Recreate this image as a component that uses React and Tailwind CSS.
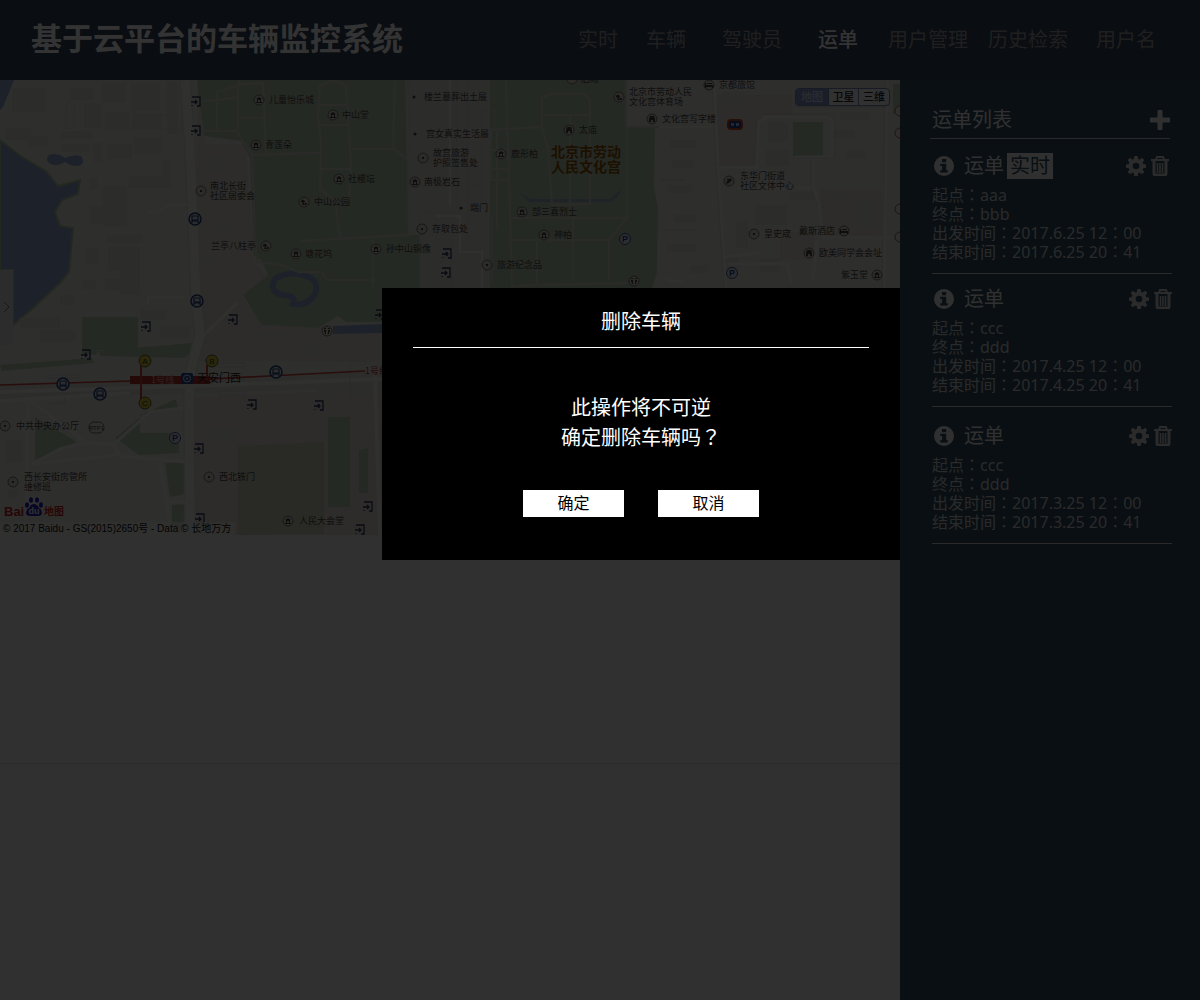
import React from "react";

const navItems = [
  { label: "实时", space: "" },
  { label: "车辆", space: "ml-7" },
  { label: "驾驶员", space: "ml-9" },
  { label: "运单", space: "ml-9", active: true },
  { label: "用户管理", space: "ml-[30px]" },
  { label: "历史检索", space: "ml-5" },
  { label: "用户名", space: "ml-7" },
];

const orders = [
  { live: true, space: "pt-[14px]", inset: "pr-[3px]", from: "aaa", to: "bbb", date: "2017.6.25" },
  { live: false, space: "pt-3", inset: "", from: "ccc", to: "ddd", date: "2017.4.25" },
  { live: false, space: "pt-4", inset: "", from: "ccc", to: "ddd", date: "2017.3.25" },
];

/* ---------- icons ---------- */

function PlusIcon() {
  return (
    <svg viewBox="0 0 20 20" className="size-5" fill="currentColor" aria-hidden="true">
      <path d="M8.500 0h3a1 1 0 0 1 1 1v6.500H19a1 1 0 0 1 1 1v3a1 1 0 0 1-1 1h-6.500V19a1 1 0 0 1-1 1h-3a1 1 0 0 1-1-1v-6.500H1a1 1 0 0 1-1-1v-3a1 1 0 0 1 1-1h6.500V1a1 1 0 0 1 1-1z" />
    </svg>
  );
}

function InfoIcon() {
  return (
    <svg viewBox="0 0 20 20" className="size-5" aria-hidden="true">
      <circle cx="10" cy="10" r="10" fill="currentColor" />
      <path d="M8 3h4.200v3.200H8zM6.200 7.800h6v6.400h1.600v2.300H6.200v-2.300h1.900v-4.100H6.200z" fill="#2d4b5f" />
    </svg>
  );
}

function GearIcon() {
  return (
    <svg viewBox="0 0 20 20" className="size-5" fill="currentColor" aria-hidden="true">
      <path
        fillRule="evenodd"
        d="M8.300 0h3.400l.5 2.900 1.400.6 2.500-1.700 2.200 2.200-1.700 2.400.6 1.500 2.800.5v3.300l-2.800.5-.6 1.500 1.700 2.400-2.200 2.200-2.500-1.700-1.400.6-.5 2.800H8.300l-.5-2.800-1.400-.6-2.500 1.700-2.200-2.200 1.700-2.400-.6-1.500L0 11.700V8.400l2.800-.5.6-1.500L1.700 4l2.200-2.200 2.500 1.700 1.400-.6zM10 6.700a3.300 3.300 0 1 0 0 6.600 3.300 3.300 0 0 0 0-6.600z"
      />
    </svg>
  );
}

function TrashIcon() {
  return (
    <svg viewBox="0 0 18 20" className="h-5 w-[18px]" fill="none" stroke="currentColor" aria-hidden="true">
      <path d="M0 4h18" strokeWidth="2" />
      <path d="M5 3.500 6 1h6l1 2.500" strokeWidth="2" />
      <path d="M3 5v12.500A1.500 1.500 0 0 0 4.500 19h9a1.500 1.500 0 0 0 1.500-1.500V5" strokeWidth="3" />
      <path d="M6.500 7v10M9 7v10M11.500 7v10" strokeWidth="1.600" />
    </svg>
  );
}

/* ---------- map ---------- */

const places = [
  ["hall", 259, 100, 269, "儿童怡乐城"],
  ["hall", 256, 145, 265, "青莲朵"],
  ["dot", 201, 191, 210, "南北长街", "社区居委会"],
  ["tree", 266, 246, 211, "兰亭八柱亭"],
  ["hall", 296, 254, 305, "塘花坞"],
  ["hall", 333, 115, 342, "中山堂"],
  ["hall", 339, 179, 348, "社稷坛"],
  ["tree", 304, 202, 314, "中山公园"],
  ["hall", 376, 249, 386, "孙中山铜像"],
  ["point", 414, 97, 424, "楼兰墓葬出土展"],
  ["point", 415, 134, 426, "宫女真实生活展"],
  ["dot", 423, 158, 433, "故宫旅游", "护照签售处"],
  ["hall", 415, 182, 424, "南极岩石"],
  ["point", 461, 208, 470, "端门"],
  ["dot", 422, 229, 432, "存取包处"],
  ["dot", 487, 265, 497, "旅游纪念品"],
  ["hall", 501, 154, 511, "鹿形柏"],
  ["gate", 569, 130, 579, "太庙"],
  ["hall", 522, 212, 532, "郜三喜烈士"],
  ["hall", 544, 235, 554, "神柏"],
  ["dot", 572, 79, 581, "后殿"],
  ["tree", 619, 97, 629, "北京市劳动人民", "文化宫体育场"],
  ["bed", 709, 85, 719, "京都旅馆"],
  ["gate", 652, 119, 662, "文化宫写字楼"],
  ["pen", 729, 181, 740, "东华门街道", "社区文体中心"],
  ["dot", 754, 234, 764, "皇史宬"],
  ["bed", 844, 231, 799, "戴斯酒店"],
  ["gate", 809, 253, 819, "欧美同学会会址"],
  ["hall", 877, 275, 841, "紫玉堂"],
  ["dot", 5, 426, 16, "中共中央办公厅"],
  ["dot", 13, 482, 24, "西长安街房管所", "维修班"],
  ["dot", 209, 477, 219, "西北铁门"],
  ["hall", 288, 521, 299, "人民大会堂"],
  ["wc", 327, 331],
  ["wc", 634, 281],
];

const glyphs = {
  hall: "M-3 -1 0 -3 3 -1zM-2 0h1v2h-1zM1 0h1v2h-1zM-3 2h6v1h-6zM-2 -1h4v1h-4z",
  tree: "M-3 0a2 2 0 0 1 3-2l1 2-1 1v1h2l1 1h-5l1-2zM1 1h2v1h-2z",
  gate: "M-3 3v-3l1-3h4l1 3v3h-2v-2h-2v2z",
  bed: "M-4 -2h1v2h7v3h-1v-1h-6v1h-1zM-2 -2h5v1h-5z",
  pen: "M-3 3l1-3 3-3 2 2-3 3zM-2 -2h2v1h-2z",
  wc: "M-3 -3h2v1h-2zM1 -3h2v1h-2zM-3 -1h2v4h-1v-2h-1zM1 -1h2v2h-1v2h-1z",
  dot: "M-1 -1h2v2h-2z",
};

const exits = [
  [195, 101], [195, 130], [145, 326], [85, 354], [232, 319], [446, 253], [445, 272],
  [251, 404], [318, 405], [198, 448], [367, 506], [359, 529], [199, 518], [379, 314],
];
const buses = [[195, 219], [197, 301], [63, 384], [100, 394], [276, 372]];
const parkings = [[625, 239], [732, 273], [175, 438]];
const stations = [["A", 145, 361], ["B", 212, 361], ["C", 145, 403]];

const buildings = [
  [12, 88, 34, 24], [71, 88, 23, 12], [102, 83, 24, 20], [131, 83, 29, 28], [84, 103, 18, 25],
  [105, 112, 25, 18], [133, 113, 29, 16], [61, 131, 31, 8], [62, 144, 28, 8], [134, 137, 27, 17],
  [107, 144, 25, 15], [93, 143, 9, 19], [129, 176, 34, 12], [162, 160, 9, 28], [103, 186, 24, 41],
  [90, 178, 7, 11], [90, 206, 13, 18], [107, 235, 36, 8], [108, 247, 32, 24], [85, 248, 14, 16],
  [105, 279, 18, 12], [82, 280, 14, 9], [120, 270, 20, 25], [60, 295, 14, 10], [167, 82, 11, 52],
  [5, 128, 26, 12], [28, 136, 20, 10], [20, 318, 40, 10], [40, 330, 36, 12], [140, 310, 26, 10],
  [160, 326, 30, 12], [205, 155, 20, 18], [204, 210, 8, 12], [216, 225, 14, 9], [205, 250, 9, 14],
  [255, 331, 30, 5], [300, 345, 22, 10], [6, 440, 16, 22], [8, 490, 10, 8], [206, 428, 30, 12],
  [462, 115, 20, 68], [425, 240, 14, 30], [450, 90, 18, 20],
  [670, 140, 26, 8], [672, 160, 22, 8], [668, 185, 24, 8], [674, 215, 22, 8], [666, 244, 30, 8],
  [722, 92, 22, 12], [768, 122, 20, 20], [765, 150, 24, 16], [755, 205, 32, 20], [790, 192, 24, 8],
  [736, 222, 12, 26], [830, 130, 24, 8], [846, 150, 20, 8], [825, 192, 20, 8], [856, 200, 20, 28],
  [725, 255, 14, 14], [760, 258, 20, 14], [840, 112, 30, 8], [690, 265, 18, 8],
];

function CityMap() {
  return (
    <svg viewBox="0 80 900 455" className="block h-auto w-full" role="img" aria-label="地图">
      <rect x="0" y="80" width="900" height="455" fill="#e6e6e2" />
      <path d="M405 80h85v208h-70v-53h-11z" fill="#dcdbd8" />

      {/* sandy blocks */}
      <g fill="#dedbd1">
        <path d="M197 82h8v62h40l10 120 12 12-25 22 26 28h112v35H198z" />
        <path d="M195 397l187-8v146H195z" />
        <path d="M717 95h75v20h-30l-5 50h-40zM820 190h62v46h-62zM780 232h34v28h-34z" />
      </g>

      {/* parks */}
      <g fill="#b9cbb2">
        <path d="M197 80h208l4 155h11v53h-38v34h-36l-8-6-20 12-56-3-19-30 25-20-6-14-8-5-4-98-9-17-37-5z" />
        <path d="M490 80h137v46l28 2-1 60 4 20-1 65-5 15H490z" />
        <path d="M82 317h56v33H98l-2 5-14-2zM98 351l94-8v10l-8 5-83-2zM0 365l92-7 2 5-92 8z" />
        <path d="M35 417l42 25-42 18zM115 438l30-25 31-14 2 10-38 6v18h39v20l-40 2z" />
        <path d="M165 463l20-1v32l-15 3zM172 505l14-1v28h-14zM328 417h22v90h-22zM359 450l9-2v45h-9z" />
        <path d="M793 122h30v34h-30zM893 84h7v30h-7z" />
      </g>
      <path d="M238 446l86-4v92l-86 1z" fill="#cbcfbf" />
      <path d="M318 385h40l24-3v12l-64 6z" fill="#dcdacf" />

      {/* water */}
      <g fill="#92a7cd">
        <path d="M0 80h14L3 107l-3 3z" />
        <path
          d="M0 140l22 17 24 14 12 15 22-6-2 14-16 6-7 12 5 14 13 2-4 44-9 11-28 26-19 16v-55H0z"
          stroke="#aec6a2"
          strokeWidth="2"
        />
        <path d="M49 155q8-3 16 3q8-4 16-2q4 5 0 9q-8 3-16-3q-9 6-16 1q-4-4 0-8z" />
        <path d="M333 326l49-2v9l-49 1z" />
        <path d="M520 193l10 6h80l10-9v4l-9 8h-82z" opacity="0.800" />
      </g>
      <path d="M276 278q16-8 30-2q14 4 9 18q-8 13-22 10q4-8-10-9q-16-4-7-17z" fill="#b9cbb2" stroke="#92a7cd" strokeWidth="6" />

      <g fill="#dcdbd6">
        {buildings.map(([x, y, w, h], i) => (
          <rect key={i} x={x} y={y} width={w} height={h} />
        ))}
      </g>
      <path d="M133 115h49v14h-49zM66 103h8v25h-8z" fill="none" stroke="#d2d2d6" strokeDasharray="2 1" />

      {/* park paths */}
      <g fill="none" stroke="#d3d5ce" strokeWidth="2">
        <path d="M217 132V92l22-7V80M238 85v48l14 22 3 85 2 22 24 3 20 8M200 101l18-1 20-3M239 84l24-1 3 70M200 131h39M240 118h26M252 155l60-2h10" />
        <path d="M320 85l14-5 12 5 5 82-2 35M320 85l-2 30 3 30-1 44 15 12 5 37M318 105h30M318 125h31M300 153h20M320 169h30M350 149h43l2-69M393 148l15 12 1 75-109 6M373 240v48M300 272h22l5 8h46" />
        <path d="M506 80l6 206 30-1 86-2M490 130l52-3V98l8-4h34l6 6v104l-38 1-4-57-6-20M544 115h45M570 116v88M491 130v50h15M497 130v100M491 150h15M491 169h15M511 218h116l-18 22M511 240h98v40M573 219v60M537 242v43M626 80v47M627 128v90M627 127h32" />
      </g>

      {/* streets */}
      <g fill="none" stroke="#dbdad7">
        <path d="M185 80l5 65 6 155 4 35-9 35-2 30 1 135" strokeWidth="12" />
        <path d="M0 392l190-6 192-7" strokeWidth="15" />
      </g>
      <g fill="none" stroke="#eeeeec">
        <path d="M185 80l5 65 6 155 4 35-9 35-2 30 1 135" strokeWidth="9" />
        <path d="M0 392l190-6 192-7M0 401l130-8M375 375l5 160" strokeWidth="4" />
        <path d="M28 400l-2 135M31 401l55 42 28 1 36-32 33-4M30 465l30-16 25-6M113 444l8 12 64 6M33 464l85-9M160 463l12 72M165 502h22M201 338l36-35" strokeWidth="3" />
        <path d="M714 80l4 85 8 123M720 167h37l2-45 8-5h60l5 4v36h-36M813 160v27l6 15 4 35 70 1M813 188h-75M727 264h60l5 20M817 240l-4 40M887 80l-3 208M760 253l-35 4M667 280l16 2" strokeWidth="3" />
        <path d="M148 213l12-2 8-6h23M148 305v-8h37M436 216h24v36h22v36M450 80v125M659 127h57" strokeWidth="2" />
      </g>
      <g fill="none" stroke="#d6d4d0" strokeWidth="1">
        <path d="M408 80l4 135h8v70M480 110h15v20M482 110v95l10 10v70M418 186h65M426 212h34v-4h20M436 216v24h16v48M468 80v160M457 80v128" />
        <path d="M712 80l4 85 8 123M717 165h37l2-45M755 120l8-6h64l8 4v40h-38M811 160v30l6 15M885 80l-3 208M660 180h25M665 230h30M48 375h31v3H48zM50 403h15v-6M218 363h26v4h-26zM219 391h25v4h-25zM335 361h30v4M350 365v35" />
      </g>

      {/* metro line */}
      <g stroke="#c9403a" fill="none">
        <path d="M0 385l130-4 80-2 155-8" strokeWidth="1.500" />
        <path d="M130 380h80" strokeWidth="8" stroke="#b0342f" />
        <path d="M141 365v38M207 365v14" strokeWidth="2" />
      </g>
      <g fontFamily='"Noto Sans CJK SC", sans-serif'>
        <text x="151" y="383" fontSize="9" fill="#ef9a94">1号线</text>
        <text x="365" y="374" fontSize="9" fill="#b93c38">1号线</text>
      </g>
      <rect x="181" y="373" width="12" height="11" rx="2" fill="#244a9c" />
      <circle cx="187" cy="378.500" r="3.500" fill="none" stroke="#dfe6f5" />
      <circle cx="187" cy="378.500" r="1" fill="#dfe6f5" />
      <text x="197" y="382" fontSize="11" fill="#1a1a1a" fontFamily='"Noto Sans CJK SC", sans-serif'>天安门西</text>
      {stations.map(([name, x, y]) => (
        <g key={name}>
          <circle cx={x} cy={y} r="6" fill="#cfc23a" stroke="#5c5a30" />
          <text x={x} y={y + 3} fontSize="8" textAnchor="middle" fill="#333" fontFamily='"Liberation Sans", sans-serif'>{name}</text>
        </g>
      ))}

      {/* transport pins */}
      {buses.map(([x, y]) => (
        <g key={x} transform={`translate(${x} ${y})`}>
          <circle r="6" fill="#d9dde8" stroke="#1f4179" strokeWidth="1.500" />
          <path d="M-3 -3h6v5h-6zM-3 2v2M3 2v2M-3 1h6" fill="none" stroke="#2a467c" strokeWidth="1.200" />
        </g>
      ))}
      {parkings.map(([x, y]) => (
        <g key={x} transform={`translate(${x} ${y})`}>
          <circle r="5.500" fill="#dfe2ec" stroke="#3a5591" />
          <text y="3" fontSize="9" fontWeight="700" textAnchor="middle" fill="#23408a" fontFamily='"Liberation Sans", sans-serif'>P</text>
        </g>
      ))}
      {exits.map(([x, y]) => (
        <g key={`${x}-${y}`} transform={`translate(${x} ${y})`} fill="none" stroke="#2c3b5c">
          <path d="M-3 -4H5V5H2M-4 1H2M0 -1l2 2-2 2M-3 4v1" strokeWidth="1.300" />
        </g>
      ))}

      {/* places */}
      <g fontFamily='"Noto Sans CJK SC", sans-serif' fontSize="9" fill="#4e4a46">
        {places.map(([kind, x, y, tx, first, second], i) => (
          <g key={i}>
            {kind === "point" ? (
              <circle cx={x} cy={y} r="1.500" fill="#444" />
            ) : (
              <g transform={`translate(${x} ${y})`}>
                <circle r="5" fill="#d6d5d0" stroke="#77736e" />
                <path d={glyphs[kind]} fill="#4a4642" />
              </g>
            )}
            {first && <text x={tx} y={second ? y - 2 : y + 3}>{first}</text>}
            {second && <text x={tx} y={y + 8}>{second}</text>}
          </g>
        ))}
      </g>
      <g fontFamily='"Noto Sans CJK SC", sans-serif' fontSize="14" fontWeight="700" fill="#8c5200">
        <text x="551" y="157">北京市劳动</text>
        <text x="551" y="172">人民文化宫</text>
      </g>
      <rect x="89" y="422" width="15" height="11" rx="5" fill="#e6e4df" stroke="#77736e" />
      <text x="96.500" y="430" fontSize="6" textAnchor="middle" fill="#444" fontFamily='"Liberation Sans", sans-serif'>RTP1</text>
      <rect x="728" y="120" width="14" height="9" rx="3" fill="#1c3f96" stroke="#c4471e" strokeWidth="2" />
      <path d="M731 123h3v3h-3zM736 123h3v3h-3z" fill="#b8c4e4" />
      <g fill="#e8e4de" stroke="#b8632e">
        <circle cx="900" cy="111" r="5" />
        <circle cx="900" cy="133" r="5" />
        <circle cx="900" cy="209" r="5" stroke="#77736e" />
        <circle cx="900" cy="237" r="5" stroke="#77736e" />
      </g>

      {/* side panel handle */}
      <path d="M0 270h13v75H0z" fill="#dcdcdc" />
      <path d="M4 302l5 5-5 5" fill="none" stroke="#777" />

      {/* provider mark */}
      <g fontFamily='"Liberation Sans", "Noto Sans CJK SC", sans-serif' fontWeight="700" fill="#c4211f">
        <text x="4" y="516" fontSize="13">Bai</text>
        <text x="44" y="515" fontSize="10" fontFamily='"Noto Sans CJK SC", sans-serif'>地图</text>
      </g>
      <g fill="#2726b8" stroke="#f2f2f2" strokeWidth="2" paintOrder="stroke">
        <path d="M34 504c4 0 8 6 8 9s-3 3-8 3-8 0-8-3 4-9 8-9z" />
        <ellipse cx="27" cy="505" rx="2" ry="2.800" />
        <ellipse cx="31" cy="500" rx="2" ry="2.800" />
        <ellipse cx="37" cy="500" rx="2" ry="2.800" />
        <ellipse cx="41" cy="505" rx="2" ry="2.800" />
      </g>
      <text x="34" y="514" fontSize="9" fontWeight="700" textAnchor="middle" fill="#eee" fontFamily='"Liberation Sans", sans-serif'>du</text>
      <rect x="0" y="522" width="235" height="13" fill="#f2f2f0" opacity="0.700" />
      <text x="3" y="532" fontSize="10" fill="#111" fontFamily='"Liberation Sans", "Noto Sans CJK SC", sans-serif'>
        © 2017 Baidu - GS(2015)2650号 - Data © 长地万方
      </text>
    </svg>
  );
}

/* ---------- sidebar ---------- */

function Centered({ children }) {
  return <span className="font-['Noto_Sans_CJK_TC',sans-serif]">{children}</span>;
}

function Detail({ children }) {
  return <p className="h-[19px]">{children}</p>;
}

function Order({ order }) {
  return (
    <li className={`border-b border-[#d0d0d0] pb-3 ${order.space}`}>
      <div className={`flex h-[26px] items-center pl-0.5 ${order.inset}`}>
        <button type="button" aria-label="详情" className="text-[#f0f0f0]">
          <InfoIcon />
        </button>
        <h3 className="ml-2.5 text-xl leading-[26px]">运单</h3>
        {order.live && (
          <span className="ml-[3px] bg-[#f0f0f0] px-[3px] text-xl leading-[26px] text-[#2d4b5f]">实时</span>
        )}
        <div className="ml-auto flex items-center gap-[5px] text-[#d4d4d4]">
          <button type="button" aria-label="设置"><GearIcon /></button>
          <button type="button" aria-label="删除"><TrashIcon /></button>
        </div>
      </div>
      <div className="mt-1.5 text-base leading-[18px] text-[#d0d0d0]">
        <Detail>起点<Centered>：</Centered>{order.from}</Detail>
        <Detail>终点<Centered>：</Centered>{order.to}</Detail>
        <Detail>出发时间<Centered>：</Centered>{order.date} 12<Centered>：</Centered>00</Detail>
        <Detail>结束时间<Centered>：</Centered>{order.date} 20<Centered>：</Centered>41</Detail>
      </div>
    </li>
  );
}

export default function App() {
  return (
    <div className="relative flex min-h-screen flex-col bg-[#f0f0f0] font-['Noto_Sans','Noto_Sans_CJK_SC',sans-serif]">
      <header className="flex h-20 items-center justify-between bg-[#324058] pr-11 pl-[31px]">
        <h1 className="pb-1 text-[31px] leading-10 font-bold text-white">基于云平台的车辆监控系统</h1>
        <nav className="flex text-xl leading-7">
          {navItems.map((item) => (
            <a
              key={item.label}
              href="#"
              aria-current={item.active ? "page" : undefined}
              className={`${item.space} ${item.active ? "font-medium text-white" : "text-[#9c9c9c]"}`}
            >
              {item.label}
            </a>
          ))}
        </nav>
      </header>

      <div className="flex flex-1">
        <main className="relative flex min-w-0 flex-1 flex-col overflow-hidden">
          <div className="relative">
            <CityMap />
            <div className="absolute top-2 right-[10px] flex rounded-sm border border-[#6d86b5] bg-[#f4f4f4] text-[11px] leading-4 font-medium text-[#222] shadow">
              <button type="button" className="w-8 bg-[#7f97cc] text-[#d8def0]">地图</button>
              <button type="button" className="w-[30px] border-l border-[#6d86b5]">卫星</button>
              <button type="button" className="w-[31px] border-l border-[#6d86b5]">三维</button>
            </div>
          </div>
          <div className="grid flex-1 grid-cols-2 grid-rows-[229px_1fr]">
            <div className="border-r border-b border-r-[#e8e8e8] border-b-[#d4d4d4]" />
            <div className="border-b border-[#d4d4d4]" />
            <div className="border-r border-[#e8e8e8]" />
          </div>

          <section
            role="dialog"
            aria-modal="true"
            aria-labelledby="dialog-title"
            className="absolute top-52 right-0 z-20 w-[518px] max-w-full bg-black px-[31px] pt-5 pb-[43px] text-center text-white"
          >
            <h2 id="dialog-title" className="border-b border-white pb-[11px] text-xl leading-7">删除车辆</h2>
            <div className="mt-[46px] text-xl leading-[28px]">
              <p className="h-[29px]">此操作将不可逆</p>
              <p className="h-[29px]">
                确定删除车辆吗<Centered>？</Centered>
              </p>
            </div>
            <div className="mt-[38px] flex justify-center gap-[34px] text-base leading-[27px] text-black">
              <button type="button" className="w-[101px] bg-white">确定</button>
              <button type="button" className="w-[101px] bg-white">取消</button>
            </div>
          </section>
        </main>

        <aside className="w-[300px] shrink-0 bg-[#2d4b5f] pt-[26px] text-[#f0f0f0]">
          <div className="mr-[30px] ml-[30px] flex items-center justify-between border-b border-[#d0d0d0] pb-1 pl-0.5">
            <h2 className="text-xl leading-7">运单列表</h2>
            <button type="button" aria-label="添加运单"><PlusIcon /></button>
          </div>
          <ul className="mr-7 ml-8">
            {orders.map((order) => (
              <Order key={order.date} order={order} />
            ))}
          </ul>
        </aside>
      </div>

      <div className="absolute inset-0 z-10 bg-black/80" />
    </div>
  );
}
